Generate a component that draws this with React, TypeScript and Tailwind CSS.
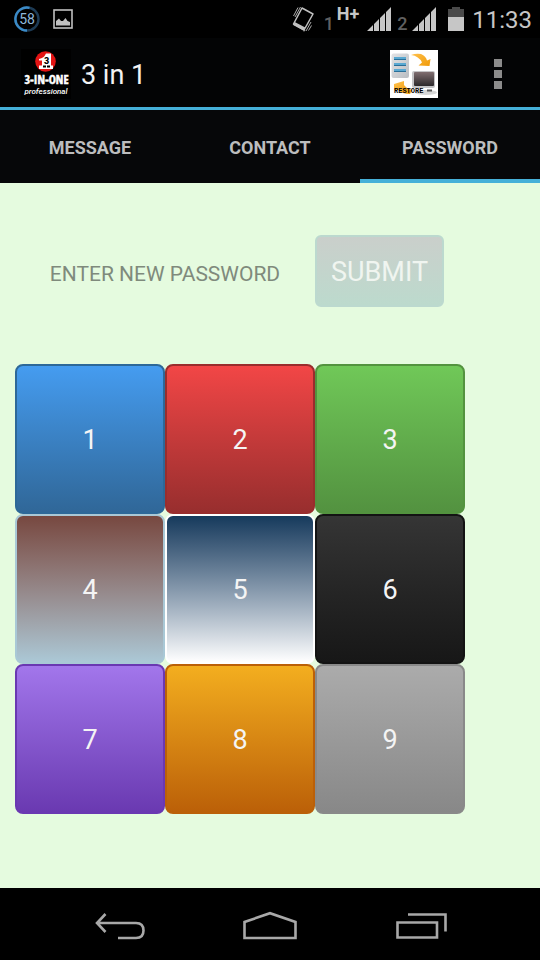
import React from 'react';
import { clsx } from 'clsx';

const tabs = ['MESSAGE', 'CONTACT', 'PASSWORD'];

const keys = [
  { digit: 1, style: 'border-[#2d6898] from-[#459cf0] to-[#306798]' },
  { digit: 2, style: 'border-[#992d2d] from-[#f24646] to-[#982e2e]' },
  { digit: 3, style: 'border-[#53933f] from-[#70c858] to-[#539240]' },
  { digit: 4, style: 'border-[#a9c8d6] from-[#774840] to-[#abc8d6]' },
  { digit: 5, style: 'border-white from-[#153a5c] to-white' },
  { digit: 6, style: 'border-[#131313] from-[#353535] to-[#171717]' },
  { digit: 7, style: 'border-[#6a38b2] from-[#a276eb] to-[#6a39b1]' },
  { digit: 8, style: 'border-[#bb6008] from-[#f3ae1f] to-[#bb6008]' },
  { digit: 9, style: 'border-[#898989] from-[#ababab] to-[#888888]' },
];

const Signal: React.FC = () => (
  <svg width="24" height="24" viewBox="0 0 24 24" fill="#c6c6c6">
    <path d="M0 24 L6 18 V24 Z M7 17 L12 12 V24 H7 Z M13 11 L18 6 V24 H13 Z M19 5 L24 0 V24 H19 Z" />
  </svg>
);

const StatusBar: React.FC = () => (
  <div className="flex h-[38px] items-center bg-black pl-[14px] pr-2 text-[#c6c6c6]">
    <svg width="26" height="26" viewBox="0 0 26 26" fill="none">
      <circle cx="13" cy="13" r="11.5" stroke="#1d3b55" strokeWidth="2.4" />
      <path d="M13 24.5 A11.5 11.5 0 1 1 15.5 1.8" stroke="#3b8ac6" strokeWidth="2.4" />
      <text x="13" y="18" textAnchor="middle" fontSize="14" fill="#8fb9dc" fontFamily="Roboto, sans-serif">
        58
      </text>
    </svg>
    <svg className="ml-[13px]" width="20" height="20" viewBox="0 0 20 20">
      <rect x="1" y="1" width="18" height="18" fill="none" stroke="#c0c0c0" strokeWidth="1.6" />
      <path d="M3 16.5 V12 L6 9.5 L8 12 L10 12 L12.5 9 L14.5 12 L17 13 V16.5 Z" fill="#c0c0c0" />
    </svg>

    <div className="ml-auto flex items-center">
      <svg width="24" height="26" viewBox="0 0 24 26" fill="none" stroke="#c0c0c0">
        <path d="M10 2 L21 8 L12 24 L1.5 18 Z" strokeWidth="1.5" strokeLinejoin="round" />
        <path d="M2 17.5 L12.5 23" strokeWidth="3.2" />
        <path d="M3 11 L8.5 1 M1.5 10 L6 1.5 M14 25 L19 16 M12 25.5 L13 24 M16.5 24.5 L19.5 19.5" strokeWidth="0.9" />
      </svg>
      <span className="ml-2 w-[10px] self-end text-[18px] font-medium leading-6 text-[#606060]">1</span>
      <span className="ml-[3px] self-start text-[18px] font-bold leading-6">H+</span>
      <div className="ml-2"><Signal /></div>
      <span className="ml-[6px] w-[10px] self-end text-[18px] font-medium leading-6 text-[#606060]">2</span>
      <div className="ml-[5px]"><Signal /></div>
      <svg className="ml-3" width="16" height="24" viewBox="0 0 16 24">
        <path d="M4 0 H12 V2 H16 V10 H0 V2 H4 Z" fill="#4a4a4a" />
        <path d="M0 10 H16 V24 H0 Z" fill="#c6c6c6" />
      </svg>
      <span className="ml-2 pt-0.5 text-[24px] leading-8">11:33</span>
    </div>
  </div>
);

const AppLogo: React.FC = () => (
  <svg width="50" height="50" viewBox="0 0 50 50" fontFamily="Roboto, sans-serif">
    <rect width="50" height="50" fill="#000000" />
    <circle cx="24.5" cy="12.5" r="10.3" fill="#e31414" />
    <path d="M18 10 Q23 9 25 4.5 H30 V16.5 H32 V20 H18 V16.5 H21 V11.5 H18 Z" fill="#ffffff" />
    <text x="25.5" y="15" textAnchor="middle" fontSize="9" fontWeight="900" fill="#000000">3</text>
    <path d="M22 17.5 H29" stroke="#000000" strokeWidth="2" strokeDasharray="3 1" />
    <text
      x="25.5"
      y="35"
      textAnchor="middle"
      fontSize="12"
      fontWeight="900"
      fill="#ffffff"
      stroke="#ffffff"
      strokeWidth="0.5"
      fontFamily="'Open Sans Condensed', Roboto, sans-serif"
    >
      3-IN-ONE
    </text>
    <text x="25" y="45" textAnchor="middle" fontSize="8" fontStyle="italic" fontWeight="500" fill="#ffffff">
      professional
    </text>
  </svg>
);

const RestoreIcon: React.FC = () => (
  <svg width="48" height="48" viewBox="0 0 48 48" fontFamily="'Liberation Mono', monospace">
    <defs>
      <linearGradient id="server" x1="0" y1="0" x2="1" y2="1">
        <stop offset="0" stopColor="#e2e3e5" />
        <stop offset="1" stopColor="#b9bdc2" />
      </linearGradient>
      <linearGradient id="screen" x1="0" y1="0" x2="0" y2="1">
        <stop offset="0" stopColor="#806e70" />
        <stop offset="1" stopColor="#2c292b" />
      </linearGradient>
      <linearGradient id="arrow" x1="0" y1="0" x2="1" y2="1">
        <stop offset="0" stopColor="#ffc04c" />
        <stop offset="1" stopColor="#f09a08" />
      </linearGradient>
    </defs>
    <rect width="48" height="48" fill="#ffffff" />
    <rect x="1.5" y="3.5" width="17.5" height="24.5" rx="2" fill="url(#server)" />
    <path d="M4 8 H16 M4 14 H16 M4 20 H16" stroke="#5aa9d2" strokeWidth="2" />
    <path d="M4 9.5 H16 M4 15.5 H16 M4 21.5 H16" stroke="#2a6f98" strokeWidth="1" />
    <path d="M21 5 Q26 3 31 4 Q36 6 37 10.5 L40.5 9 L39.5 16 L28.5 15.5 L32 12.5 Q29 6 21 5 Z" fill="url(#arrow)" />
    <path d="M4 34 L14 31 L14 35 Q17 39 22 40 L20 44 Q12 44 8 40 L4 40 Z" fill="url(#arrow)" />
    <ellipse cx="36" cy="42.5" rx="11" ry="2.5" fill="#d6d6d6" />
    <rect x="22" y="21" width="23" height="17" rx="2" fill="#c4c4c6" />
    <rect x="24" y="22" width="20" height="14" rx="1" fill="url(#screen)" />
    <path d="M37 40.5 H42" stroke="#555555" strokeWidth="2" />
    <text x="4" y="43" fontSize="7" fontWeight="bold" fill="#000000">RESTORE</text>
  </svg>
);

const ActionBar: React.FC = () => (
  <header className="flex h-[72px] items-center border-b-[3px] border-[#45b0d8] bg-[#030405] pl-[21px] pr-[30px] pt-0.5">
    <AppLogo />
    <h1 className="ml-[10px] pt-0.5 text-[27px] leading-8 text-[#f3f3f3]">3 in 1</h1>
    <button type="button" aria-label="Restore" className="ml-auto">
      <RestoreIcon />
    </button>
    <button type="button" aria-label="More options" className="ml-12 px-2">
      <svg width="8" height="30" viewBox="0 0 8 30" fill="#8b8b8b">
        <path d="M0 0 H8 V8 H0 Z M0 11 H8 V19 H0 Z M0 22 H8 V30 H0 Z" />
      </svg>
    </button>
  </header>
);

const NavBar: React.FC = () => (
  <nav className="grid h-[72px] grid-cols-[1fr_180px_1fr] items-center bg-black pt-[3px]">
    <button type="button" aria-label="Back" className="ml-auto mr-[35px]">
      <svg width="50" height="28" viewBox="0 0 50 28" fill="none" stroke="#a8a8a8" strokeWidth="2.6">
        <path d="M10.5 2 L2 11 L10.5 20 M2 11 H41 Q48.5 11 48.5 18.5 Q48.5 26 41 26 H23" />
      </svg>
    </button>
    <button type="button" aria-label="Home" className="mx-auto">
      <svg width="54" height="30" viewBox="0 0 54 30" fill="none" stroke="#a8a8a8" strokeWidth="2.6">
        <path d="M1.5 27 V11 L27 2.2 L52.5 11 V27 Z" />
      </svg>
    </button>
    <button type="button" aria-label="Recent apps" className="ml-9 mr-auto">
      <svg width="52" height="26" viewBox="0 0 52 26" fill="none" stroke="#a8a8a8" strokeWidth="2.6">
        <path d="M1.5 9.5 H41 V24.5 H1.5 Z M12 1.5 H49.5 V18.5" />
      </svg>
    </button>
  </nav>
);

const App: React.FC = () => {
  return (
    <div className="flex min-h-screen flex-col bg-[#e5fbdf] font-[Roboto,sans-serif]">
      <StatusBar />
      <ActionBar />

      <div role="tablist" className="grid h-[73px] grid-cols-3 bg-[#060709]">
        {tabs.map((tab) => (
          <button
            key={tab}
            type="button"
            role="tab"
            aria-selected={tab === 'PASSWORD'}
            className={clsx(
              'border-b-4 pt-1.5 text-[18px] font-bold leading-6 text-[#bcbdbe]',
              tab === 'PASSWORD' ? 'border-[#45b0d8]' : 'border-transparent',
            )}
          >
            {tab}
          </button>
        ))}
      </div>

      <main className="ml-[15px] w-5/6 flex-1 pb-[74px] pt-[52px]">
        <div className="flex items-baseline">
          <p className="w-2/3 text-center text-[21px] leading-7 text-[#7f8a7c]">ENTER NEW PASSWORD</p>
          <button
            type="button"
            disabled
            className="h-[72px] rounded-md border-2 border-[#bcd9cf] bg-linear-to-b from-[#cacfcb] to-[#bcdacd] px-[14px] pt-0.5 text-[27px] leading-8 text-[#f0f5f0]"
          >
            SUBMIT
          </button>
        </div>

        <div className="mt-[57px] grid grid-cols-3">
          {keys.map(({ digit, style }) => (
            <button
              key={digit}
              type="button"
              className={clsx(
                'aspect-square rounded-lg border-2 bg-linear-to-b pt-0.5 text-[27px] leading-8 text-[#f4f4f4]',
                style,
              )}
            >
              {digit}
            </button>
          ))}
        </div>
      </main>

      <NavBar />
    </div>
  );
};

export default App;
